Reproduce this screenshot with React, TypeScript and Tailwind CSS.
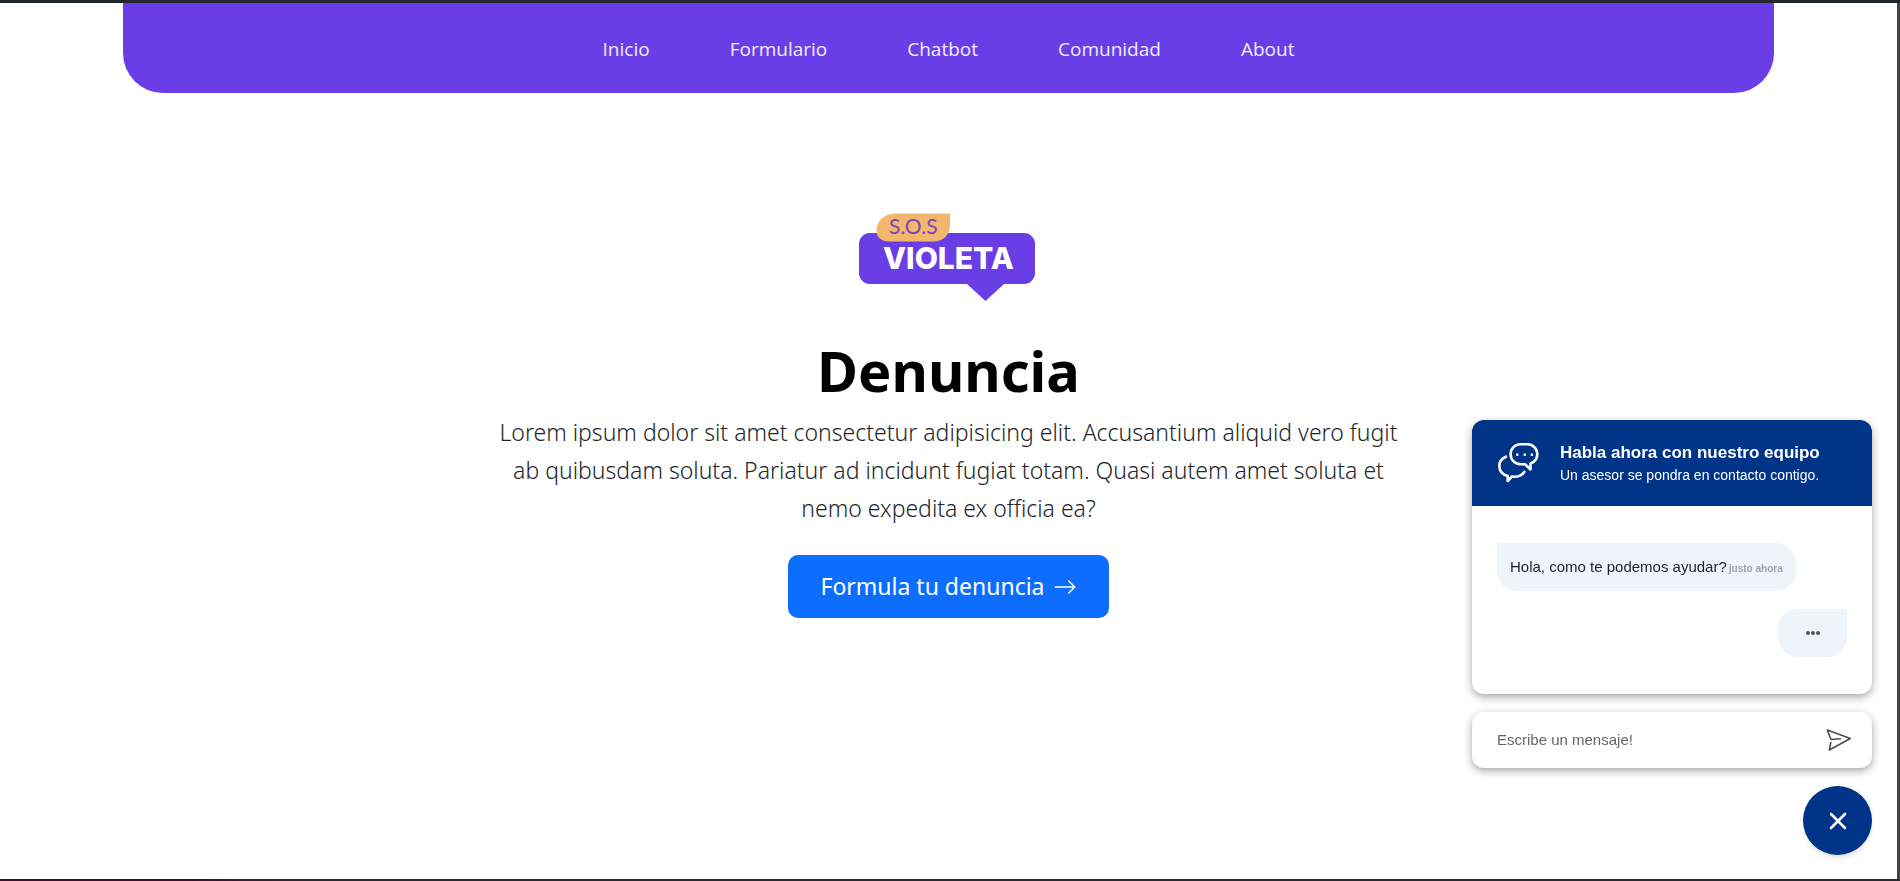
import { useState } from 'react';
import { BsArrowRight } from 'react-icons/bs';

const NAV_LINKS = ['Inicio', 'Formulario', 'Chatbot', 'Comunidad', 'About'];

function Navbar() {
  return (
    <nav className="w-[87%] mx-auto h-[90px] pt-0.5 flex items-center justify-center gap-20 rounded-b-[40px] bg-[#693ee6] font-['Open_Sans','Noto_Sans',sans-serif]">
      {NAV_LINKS.map((label) => (
        <a
          key={label}
          href={`#${label.toLowerCase()}`}
          className="text-[19px] leading-7 text-white/90 hover:text-white"
        >
          {label}
        </a>
      ))}
    </nav>
  );
}

function Logo() {
  return (
    <svg
      width="178"
      height="90"
      viewBox="2 0 178 90"
      overflow="visible"
      role="img"
      aria-label="S.O.S Violeta"
    >
      <path
        d="M12 20H166A11 11 0 0 1 177 31V60A11 11 0 0 1 166 71H146L127.500 88L109 71H12A11 11 0 0 1 1 60V31A11 11 0 0 1 12 20Z"
        fill="#693ee6"
      />
      <path
        d="M38 0.500H92V11C92 22 86 28.500 75 28.500H31C23 28.500 18.500 24 18.500 18C18.500 8 26 0.500 38 0.500Z"
        fill="#f2b66d"
      />
      <text
        x="31"
        y="21"
        fontSize="21"
        fill="#7d45b5"
        className="font-['Lato']"
      >
        S.O.S
      </text>
      <text
        x="25"
        y="56"
        fontSize="30"
        fill="#fff"
        className="font-['Inter'] font-extrabold"
      >
        VIOLETA
      </text>
    </svg>
  );
}

function Hero() {
  return (
    <main className="w-[912px] max-w-full mx-auto pt-[120px] flex flex-col items-center text-center">
      <Logo />
      <h1 className="mt-8 text-[56px] leading-[70px] font-bold text-black">
        Denuncia
      </h1>
      <p className="mt-2 text-[23px] leading-[38px] font-light text-[#212529]">
        Lorem ipsum dolor sit amet consectetur adipisicing elit. Accusantium
        aliquid vero fugit ab quibusdam soluta. Pariatur ad incidunt fugiat
        totam. Quasi autem amet soluta et nemo expedita ex officia ea?
      </p>
      <a
        href="#formulario"
        className="mt-7 h-[63px] px-8 inline-flex items-center gap-2 rounded-[10px] bg-[#0d6efd] text-[23px] text-white"
      >
        Formula tu denuncia
        <BsArrowRight className="size-6" />
      </a>
    </main>
  );
}

function ChatsIcon() {
  return (
    <svg
      width="42"
      height="40"
      viewBox="0 0 42 40"
      fill="none"
      stroke="#fff"
      strokeWidth="2.600"
      strokeLinecap="round"
      strokeLinejoin="round"
      aria-hidden="true"
    >
      <path d="M23 1.300H30A9.900 9.900 0 0 1 32.500 20.600V26.500L27 21.200H22.500C16.500 21 12.600 16.500 12.600 11.200C12.600 5.500 17 1.300 23 1.300Z" />
      <path d="M8 13.700C3.500 15.500 1.300 19 1.300 23C1.300 28 4.500 31.500 9.700 33V38L14 33.500C19.500 34.200 24 32.800 26.300 28.900" />
      <path d="M18.200 11.700H20.400M25.600 11.700H27.800M32.800 11.700H35" strokeWidth="2.400" strokeLinecap="butt" />
    </svg>
  );
}

function SendIcon() {
  return (
    <svg
      width="26"
      height="24"
      viewBox="0 0 26 24"
      fill="none"
      stroke="#4d4d4d"
      strokeWidth="1.600"
      strokeLinecap="round"
      strokeLinejoin="round"
      aria-hidden="true"
    >
      <path d="M4.800 14.500L3.300 22L24.300 10.500L1.300 2L5 11.500L14.500 10.700" />
    </svg>
  );
}

function ChatWindow() {
  return (
    <>
      <section className="rounded-xl overflow-hidden bg-white shadow-[0_3px_8px_rgba(0,0,0,0.35)]">
        <header className="h-[86px] px-[26px] flex items-center gap-5 bg-[#003489] text-white">
          <ChatsIcon />
          <div>
            <h2 className="text-[17px] leading-6 font-bold">
              Habla ahora con nuestro equipo
            </h2>
            <p className="text-sm leading-5">
              Un asesor se pondra en contacto contigo.
            </p>
          </div>
        </header>
        <div className="px-[25px] pt-[37px] pb-[37px] flex flex-col gap-[18px]">
          <p className="self-start h-12 px-[13px] flex items-center gap-0.5 rounded-[20px] rounded-tl-none bg-[#eff4fb] text-[15px] text-[#1f2329]">
            Hola, como te podemos ayudar?
            <small className="pt-0.5 text-[10px] font-bold text-[#a0a4aa]">
              justo ahora
            </small>
          </p>
          <div className="self-end w-[69px] h-12 flex items-center justify-center gap-px rounded-[20px] rounded-tr-none bg-[#eff4fb]">
            <span className="size-1 rounded-full bg-[#555]" />
            <span className="size-1 rounded-full bg-[#555]" />
            <span className="size-1 rounded-full bg-[#555]" />
          </div>
        </div>
      </section>
      <form
        className="h-14 pl-[25px] pr-5 flex items-center rounded-xl bg-white shadow-[0_3px_8px_rgba(0,0,0,0.35)]"
        onSubmit={(e) => e.preventDefault()}
      >
        <input
          type="text"
          aria-label="Escribe un mensaje!"
          placeholder="Escribe un mensaje!"
          className="flex-1 min-w-0 text-[15px] text-[#333] placeholder:text-[#666] outline-none"
        />
        <button type="submit" aria-label="Enviar">
          <SendIcon />
        </button>
      </form>
    </>
  );
}

function ChatWidget() {
  const [open, setOpen] = useState(true);
  return (
    <aside className="fixed right-7 bottom-[26px] w-[400px] flex flex-col gap-[18px] font-['Liberation_Sans',Arial,sans-serif]">
      {open && <ChatWindow />}
      <button
        type="button"
        onClick={() => setOpen(!open)}
        aria-label={open ? 'Cerrar chat' : 'Abrir chat'}
        className="self-end size-[69px] flex items-center justify-center rounded-full bg-[#003489] text-white shadow-md"
      >
        <svg
          width="18"
          height="18"
          viewBox="0 0 18 18"
          stroke="currentColor"
          strokeWidth="2.600"
          strokeLinecap="round"
          aria-hidden="true"
        >
          <path d="M2 2L16 16M16 2L2 16" />
        </svg>
      </button>
    </aside>
  );
}

export default function App() {
  return (
    <div className="min-h-screen flex flex-col bg-white font-['Noto_Sans','Open_Sans',sans-serif]">
      <div className="h-[3px] bg-[#22272e]" />
      <div className="flex-1 flex">
        <div className="flex-1 min-w-0">
          <Navbar />
          <Hero />
        </div>
        <div className="w-[3px] bg-[#424242]" />
      </div>
      <div className="h-0.5 bg-linear-to-r from-[#3b0f2e] from-10% to-[#2c2c30] to-16%" />
      <ChatWidget />
    </div>
  );
}
